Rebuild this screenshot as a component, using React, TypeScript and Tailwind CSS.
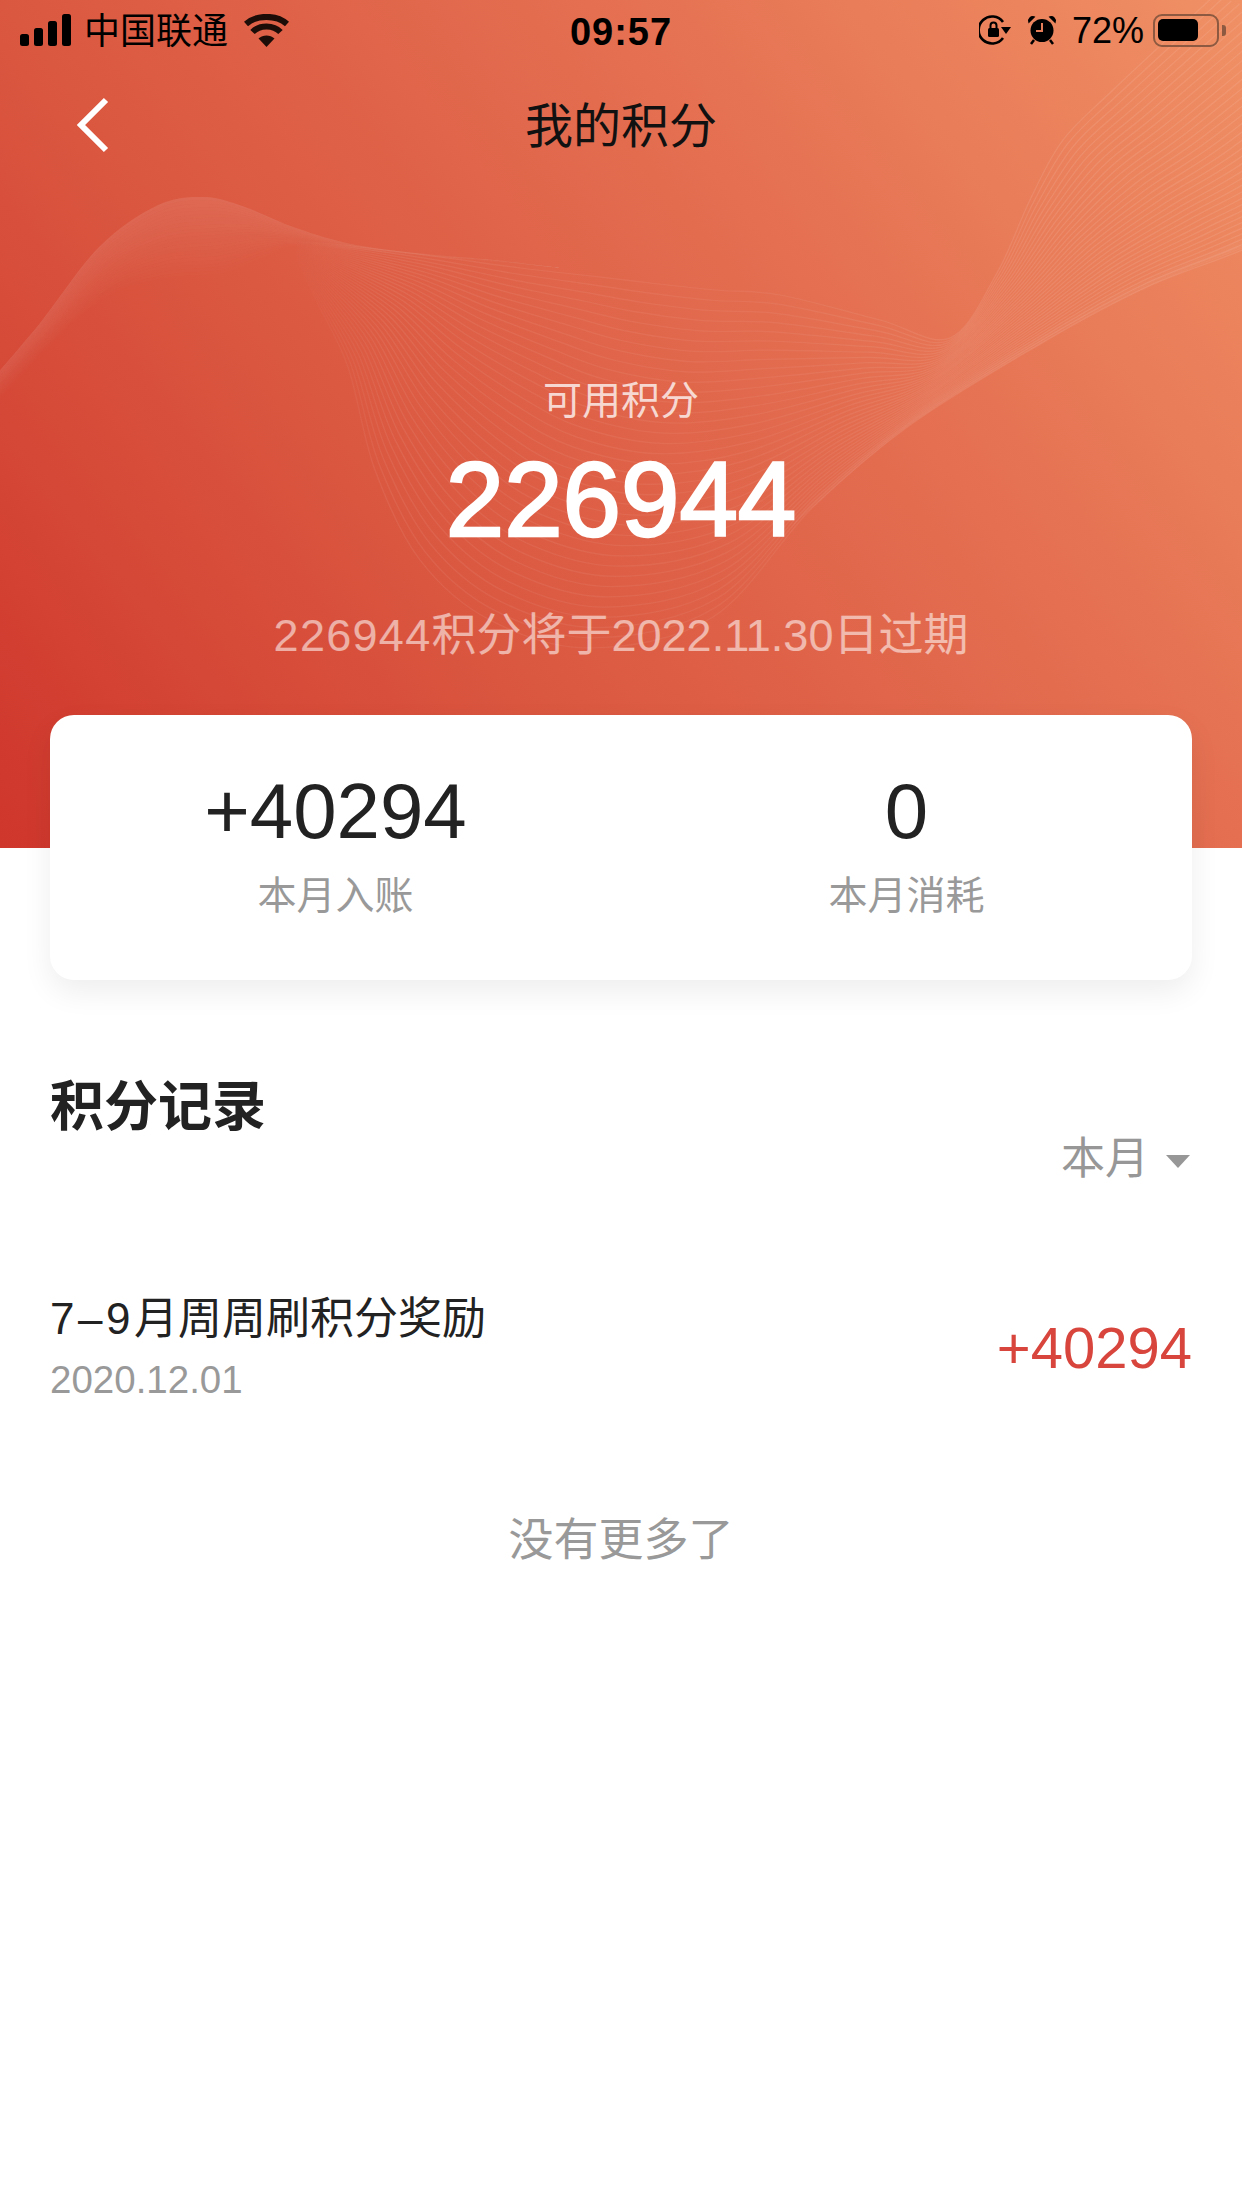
const fontStack = "font-['Liberation_Sans','Noto_Sans_CJK_SC',sans-serif]";

type Pt = [number, number];

function spline(pts: Pt[]) {
  let d = `M${pts[0][0]} ${pts[0][1]}`;
  for (let i = 0; i < pts.length - 1; i++) {
    const p0 = pts[Math.max(i - 1, 0)];
    const p1 = pts[i];
    const p2 = pts[i + 1];
    const p3 = pts[Math.min(i + 2, pts.length - 1)];
    d += ` C${p1[0] + (p2[0] - p0[0]) / 6} ${p1[1] + (p2[1] - p0[1]) / 6} ${p2[0] - (p3[0] - p1[0]) / 6} ${p2[1] - (p3[1] - p1[1]) / 6} ${p2[0]} ${p2[1]}`;
  }
  return d;
}

const mix = (a: Pt[], b: Pt[], t: number) => a.map((p, k): Pt => [p[0] + (b[k][0] - p[0]) * t, p[1] + (b[k][1] - p[1]) * t]);

// soft band made of thin strips between two edges
function strips(a: Pt[], b: Pt[], from: number, to: number, count = 24) {
  return Array.from({ length: count }, (_, i) => {
    const top = mix(a, b, i / count);
    const bottom = mix(a, b, (i + 1) / count);
    return {
      d: `${spline(top)} ${spline([...bottom].reverse()).replace("M", "L")} Z`,
      opacity: from + (to - from) * (i / (count - 1)),
    };
  });
}

// upper and lower edge of the ribbon, the lines in between are interpolated
const upper: Pt[] = [[292, 240], [360, 247], [440, 257], [520, 268], [600, 277], [650, 283], [715, 290], [780, 295], [880, 320], [950, 338], [997, 273], [1030, 200], [1063, 140], [1113, 90], [1215, -5]];
const lower: Pt[] = [[292, 250], [316, 300], [348, 367], [375, 470], [420, 560], [490, 620], [590, 648], [713, 617], [813, 507], [913, 423], [1047, 340], [1147, 287], [1242, 250], [1340, 205], [1500, 100]];
const ribbon = Array.from({ length: 36 }, (_, i) => spline(mix(upper, lower, i / 35)));

const humpTop: Pt[] = [[-5, 376], [40, 323], [99, 247], [158, 205], [205, 197], [245, 207], [296, 228], [356, 245], [435, 255], [494, 260], [560, 268]];
const humpBottom: Pt[] = [[-5, 408], [55, 345], [110, 300], [165, 285], [225, 280], [265, 262], [300, 248], [356, 253], [435, 258], [494, 262], [560, 268]];
const hump = strips(humpTop, humpBottom, 0.1, 0);

const edgeTop: Pt[] = [[790, 530], [813, 497], [913, 411], [1047, 326], [1147, 274], [1250, 232]];
const edgeBottom: Pt[] = [[790, 530], [813, 507], [913, 423], [1047, 340], [1147, 287], [1250, 246]];
const edge = strips(edgeTop, edgeBottom, 0, 0.06, 8);

function Wave() {
  return (
    <svg className="absolute inset-0" width="1242" height="848" viewBox="0 0 1242 848" fill="none">
      <defs>
        <linearGradient id="line" x1="292" y1="0" x2="1242" y2="0" gradientUnits="userSpaceOnUse">
          <stop offset="0" stopColor="#fff" stopOpacity="0" />
          <stop offset="0.1" stopColor="#fff" stopOpacity="0.07" />
          <stop offset="0.5" stopColor="#fff" stopOpacity="0.05" />
          <stop offset="0.8" stopColor="#fff" stopOpacity="0.09" />
          <stop offset="1" stopColor="#fff" stopOpacity="0.09" />
        </linearGradient>
      </defs>
      {hump.map((s, i) => (
        <path key={i} d={s.d} fill="#fff" fillOpacity={s.opacity} />
      ))}
      {edge.map((s, i) => (
        <path key={i} d={s.d} fill="#fff" fillOpacity={s.opacity} />
      ))}
      {ribbon.map((d, i) => (
        <path key={i} d={d} stroke="url(#line)" strokeWidth="1.2" />
      ))}
    </svg>
  );
}

function StatusBar() {
  return (
    <div className="relative flex h-[60px] items-center text-black">
      <svg className="ml-5" width="51" height="32" viewBox="0 0 51 32" fill="#000">
        <rect x="0" y="20" width="9" height="12" rx="2.5" />
        <rect x="14" y="14" width="9" height="18" rx="2.5" />
        <rect x="28" y="7" width="9" height="25" rx="2.5" />
        <rect x="42" y="0" width="9" height="32" rx="2.5" />
      </svg>
      <span className="ml-[13px] mt-[3px] text-[36px] leading-none">中国联通</span>
      <svg className="ml-[16px]" width="45" height="33" viewBox="0 0 45 33" fill="none">
        <path d="M22.5 33 L14.5 24.5 C19 20.5 26 20.5 30.5 24.5 Z" fill="#1d0d08" />
        <path d="M8.5 18 C15.5 10.5 29.5 10.5 36.5 18" stroke="#1d0d08" strokeWidth="6" />
        <path d="M2 10 C12.5 0.5 32.5 0.5 43 10" stroke="#1d0d08" strokeWidth="6" />
      </svg>
      <span className="absolute left-0 right-0 mt-[3px] text-center text-[38px] font-bold leading-none tracking-[1px]">09:57</span>
      <div className="ml-auto flex items-center">
        <svg width="32" height="30" viewBox="0 0 32 30" fill="none">
          <path d="M24 7 A13.5 13.5 0 1 0 24 23" stroke="#000" strokeWidth="2.6" />
          <path d="M22 12 H32 L27 19 Z" fill="#000" />
          <rect x="9" y="13" width="11" height="9" rx="1.5" fill="#000" />
          <path d="M11.5 13 V10.5 A3 3 0 0 1 17.5 10.5 V13" stroke="#000" strokeWidth="2" />
        </svg>
        <svg className="ml-[16px]" width="30" height="30" viewBox="0 0 30 30" fill="none">
          <circle cx="15" cy="15.5" r="11.5" fill="#000" />
          <path d="M15 8 V16 H9" stroke="#e67e5a" strokeWidth="2" />
          <path d="M2 7 L7 2 A4 4 0 0 0 2 7 Z M28 7 L23 2 A4 4 0 0 1 28 7 Z" fill="#000" stroke="#000" strokeWidth="1.5" />
          <path d="M7 25 L4 29 M23 25 L26 29" stroke="#000" strokeWidth="2.5" />
        </svg>
        <span className="ml-[15px] mt-[2px] text-[36px] leading-none">72%</span>
        <div className="ml-[9px] flex items-center">
          <div className="flex h-[33px] w-[66px] items-center rounded-[9px] border-[2.5px] border-[#8d5a41] px-[3px]">
            <div className="h-[22px] w-[40px] rounded-[5px] bg-black" />
          </div>
          <div className="ml-[3px] h-[11px] w-[4px] rounded-r-[3px] bg-[#8d5a41]" />
        </div>
        <div className="w-4" />
      </div>
    </div>
  );
}

function Stat({ value, label }: { value: string; label: string }) {
  return (
    <div className="flex flex-col items-center">
      <div className="text-[78px] leading-[90px] text-[#222222]">{value}</div>
      <div className="mt-[15px] text-[39px] leading-[50px] text-[#999999]">{label}</div>
    </div>
  );
}

export default function App() {
  return (
    <div className={`min-h-[2208px] w-[1242px] overflow-hidden bg-white ${fontStack}`}>
      <header className="relative h-[848px] overflow-hidden bg-[linear-gradient(52deg,#cf362c_0%,#da563f_33%,#e36c4f_62%,#f09065_100%)]">
        <Wave />
        <div className="relative">
          <StatusBar />
          <nav className="mt-[32px] grid h-[70px] grid-cols-[1fr_auto_1fr] items-center">
            <svg className="ml-[76px] -mt-[4px]" width="34" height="56" viewBox="0 0 34 56" fill="none">
              <path d="M30 3 L5 28 L30 53" stroke="#fff" strokeWidth="6" />
            </svg>
            <h1 className="text-[48px] font-normal leading-none text-[#111111]">我的积分</h1>
            <div />
          </nav>
          <div className="flex flex-col items-center">
            <div className="mt-[214px] text-[39px] leading-[50px] text-white/75">可用积分</div>
            <div className="mt-[14px] text-[105px] leading-[120px] text-white [-webkit-text-stroke:2.5px_white]">226944</div>
            <div className="mt-[46px] text-[45px] leading-[60px] text-white/55">
              <span className="tracking-[1.3px]">226944</span>积分将于2022.11.30日过期
            </div>
          </div>
        </div>
      </header>

      <section className="relative mx-[50px] -mt-[133px] grid h-[265px] grid-cols-2 rounded-[24px] bg-white pt-[51px] shadow-[0_12px_30px_rgba(0,0,0,0.07)]">
        <Stat value="+40294" label="本月入账" />
        <Stat value="0" label="本月消耗" />
      </section>

      <section className="px-[50px]">
        <div className="mt-[97px] flex items-start justify-between">
          <h2 className="text-[54px] font-bold leading-[60px] text-[#222222]">积分记录</h2>
          <div className="mt-[57px] flex items-center gap-[17px] pr-[2px] text-[44px] leading-[50px] text-[#979797]">
            本月
            <span className="mt-[5px] h-0 w-0 border-x-[12px] border-t-[13px] border-x-transparent border-t-[#979797]" />
          </div>
        </div>
        <div className="mt-[110px] flex items-center justify-between">
          <div>
            <div className="text-[44px] leading-[50px] text-[#222222]">
              <span className="tracking-[3.5px]">7–9</span>月周周刷积分奖励
            </div>
            <div className="mt-[13px] text-[38.5px] leading-[46px] text-[#999999]">2020.12.01</div>
          </div>
          <div className="mb-[2px] text-[58px] leading-none text-[#d8453c]">+40294</div>
        </div>
        <div className="mt-[113px] text-center text-[45px] leading-[50px] text-[#999999]">没有更多了</div>
      </section>
    </div>
  );
}
